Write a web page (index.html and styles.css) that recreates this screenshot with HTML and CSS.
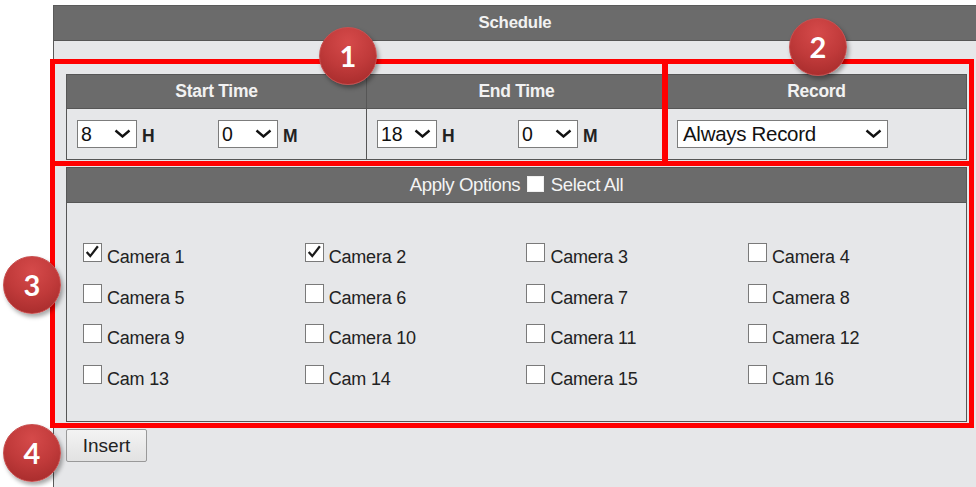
FILE: index.html
```html
<!DOCTYPE html>
<html lang="en">
<head>
    <meta charset="UTF-8">
    <meta name="viewport" content="width=device-width, initial-scale=1.0">
    <title>Schedule</title>
    <link rel="stylesheet" href="styles.css">
</head>
<body>
    <div id="page">
        <div class="panel">
            <div class="panel-title">Schedule</div>
            <div class="panel-body">
                <div class="sched-table">
                    <div class="th">Start Time</div>
                    <div class="th">End Time</div>
                    <div class="th">Record</div>

                    <div class="td">
                        <div class="pair">
                            <div class="dd">8<svg class="chev" viewBox="0 0 17 9"><path d="M1.5 1.5 L8.5 7.5 L15.5 1.5"/></svg></div>
                            <span class="unit">H</span>
                        </div>
                        <div class="pair">
                            <div class="dd">0<svg class="chev" viewBox="0 0 17 9"><path d="M1.5 1.5 L8.5 7.5 L15.5 1.5"/></svg></div>
                            <span class="unit">M</span>
                        </div>
                    </div>
                    <div class="td">
                        <div class="pair">
                            <div class="dd">18<svg class="chev" viewBox="0 0 17 9"><path d="M1.5 1.5 L8.5 7.5 L15.5 1.5"/></svg></div>
                            <span class="unit">H</span>
                        </div>
                        <div class="pair">
                            <div class="dd">0<svg class="chev" viewBox="0 0 17 9"><path d="M1.5 1.5 L8.5 7.5 L15.5 1.5"/></svg></div>
                            <span class="unit">M</span>
                        </div>
                    </div>
                    <div class="td">
                        <div class="dd dd-wide">Always Record<svg class="chev" viewBox="0 0 17 9"><path d="M1.5 1.5 L8.5 7.5 L15.5 1.5"/></svg></div>
                    </div>
                </div>

                <div class="apply">
                    <div class="apply-head">Apply Options <span class="cb cb-plain"></span> Select All</div>
                    <div class="cam-grid" id="cam-grid"></div>
                </div>

                <button class="insert">Insert</button>
            </div>
        </div>

        <!-- annotation frames and numbered badges -->
        <div class="frame frame-1"></div>
        <div class="frame frame-2"></div>
        <div class="frame frame-3"></div>
        <div class="badge badge-1">1</div>
        <div class="badge badge-2">2</div>
        <div class="badge badge-3">3</div>
        <div class="badge badge-4">4</div>
    </div>

    <script>
        // camera list for the apply options grid
        const cameras = [
            { name: 'Camera 1', on: true },
            { name: 'Camera 2', on: true },
            { name: 'Camera 3' },
            { name: 'Camera 4' },
            { name: 'Camera 5' },
            { name: 'Camera 6' },
            { name: 'Camera 7' },
            { name: 'Camera 8' },
            { name: 'Camera 9' },
            { name: 'Camera 10' },
            { name: 'Camera 11' },
            { name: 'Camera 12' },
            { name: 'Cam 13' },
            { name: 'Cam 14' },
            { name: 'Camera 15' },
            { name: 'Cam 16' }
        ];

        const grid = document.getElementById('cam-grid');
        cameras.forEach(cam => {
            const item = document.createElement('label');
            item.classList.add('cam');
            const tick = cam.on
                ? '<svg viewBox="0 0 19 19"><path d="M3 9 L7 13.5 L15.5 2.5"/></svg>'
                : '';
            item.innerHTML = `<span class="cb">${tick}</span><span class="cam-name">${cam.name}</span>`;
            grid.appendChild(item);
        });
    </script>
</body>
</html>
```

FILE: styles.css
```css
body {
    margin: 0;
    background-color: #fff;
    font-family: "Liberation Sans", Arial, sans-serif;
    color: #1a1a1a;
}
#page {
    position: relative;
    width: 976px;
    height: 487px;
    overflow: hidden;
}
.panel {
    margin: 5px 0 0 53px;
    height: 482px;
    background-color: #e6e7e9;
    border-left: 1px solid #5a5a5a;
}
.panel-title {
    height: 34px;
    line-height: 34px;
    background-color: #6b6b6b;
    border-top: 1px solid #5a5a5a;
    border-bottom: 1px solid #555;
    color: #f2f2f2;
    font-size: 16.8px;
    font-weight: bold;
    text-align: center;
    letter-spacing: -0.2px;
}
.panel-body {
    padding: 33px 0 0 12px;
}
.sched-table {
    display: grid;
    grid-template-columns: 299px 299px 299px;
    grid-template-rows: 33px 50px;
    gap: 1px;
    padding: 1px;
    width: 899px;
    background-color: #565656;
}
.th {
    background-color: #6b6b6b;
    color: #f2f2f2;
    font-size: 17.5px;
    font-weight: bold;
    text-align: center;
    line-height: 33px;
    letter-spacing: -0.3px;
}
.td {
    background-color: #e6e7e9;
    display: flex;
    align-items: center;
    padding-left: 10px;
}
.pair {
    display: flex;
    align-items: center;
    width: 141px;
}
.dd {
    position: relative;
    box-sizing: border-box;
    width: 60px;
    height: 28px;
    padding-left: 3px;
    background-color: #fff;
    border: 1px solid #7c7c7c;
    font-size: 19.5px;
    line-height: 26px;
    color: #111;
}
.dd-wide {
    width: 211px;
    padding-left: 5px;
    font-size: 20.5px;
    letter-spacing: -0.3px;
}
.chev {
    position: absolute;
    right: 5px;
    top: 8px;
    width: 17px;
    height: 9px;
}
.chev path {
    fill: none;
    stroke: #111;
    stroke-width: 2.4;
}
.unit {
    margin-left: 5px;
    font-size: 17.5px;
    font-weight: bold;
    color: #222;
    padding-top: 4px;
}
.apply {
    margin-top: 7px;
    width: 899px;
    border: 1px solid #565656;
}
.apply-head {
    height: 34px;
    line-height: 34px;
    background-color: #6b6b6b;
    border-bottom: 1px solid #565656;
    color: #f4f4f4;
    font-size: 18.6px;
    text-align: center;
    letter-spacing: -0.4px;
}
.apply-head .cb {
    vertical-align: -1px;
    margin: 0 2px;
}
.cam-grid {
    display: grid;
    grid-template-columns: repeat(4, 221.7px);
    grid-auto-rows: 40.5px;
    padding: 40px 0 16px 16px;
    height: 162px;
}
.cam {
    display: flex;
    align-items: flex-start;
}
.cb {
    display: inline-block;
    box-sizing: border-box;
    width: 19px;
    height: 19px;
    background-color: #fff;
    border: 1px solid #7a7a7a;
}
.cb-plain {
    width: 17px;
    height: 16px;
    border-color: #f0f0f0;
}
.cb svg {
    display: block;
    width: 17px;
    height: 17px;
}
.cb svg path {
    fill: none;
    stroke: #1a1a1a;
    stroke-width: 2.5;
}
.cam-name {
    margin-left: 5px;
    padding-top: 3px;
    font-size: 18px;
    line-height: 22px;
    color: #222;
    letter-spacing: -0.2px;
}
.insert {
    display: block;
    margin-top: 7px;
    width: 81px;
    height: 33px;
    padding: 0;
    border: 1px solid #999;
    border-radius: 2px;
    background: linear-gradient(#f3f3f3, #e2e2e2);
    font-family: "Liberation Sans", Arial, sans-serif;
    font-size: 19px;
    color: #222;
}
.frame {
    position: absolute;
    box-sizing: border-box;
    border: 5px solid #ff0000;
}
.frame-1 {
    left: 50px;
    top: 59px;
    width: 618px;
    height: 107px;
}
.frame-2 {
    left: 662px;
    top: 59px;
    width: 312px;
    height: 107px;
}
.frame-3 {
    left: 50px;
    top: 161px;
    width: 924px;
    height: 267px;
}
.badge {
    position: absolute;
    box-sizing: border-box;
    width: 58px;
    height: 58px;
    border-radius: 50%;
    border: 1px solid #c85050;
    background: radial-gradient(circle at 50% 25%, #d54a4a 0%, #c03a3a 50%, #a02828 100%);
    box-shadow: 2px 3px 4px rgba(0, 0, 0, 0.35);
    color: #fff;
    font-family: Lato, "Open Sans", sans-serif;
    font-weight: bold;
    font-size: 29px;
    text-align: center;
    line-height: 55px;
}
.badge-1 {
    left: 319px;
    top: 27px;
}
.badge-2 {
    left: 789px;
    top: 18px;
}
.badge-3 {
    left: 3px;
    top: 256px;
}
.badge-4 {
    left: 3px;
    top: 424px;
}
```
